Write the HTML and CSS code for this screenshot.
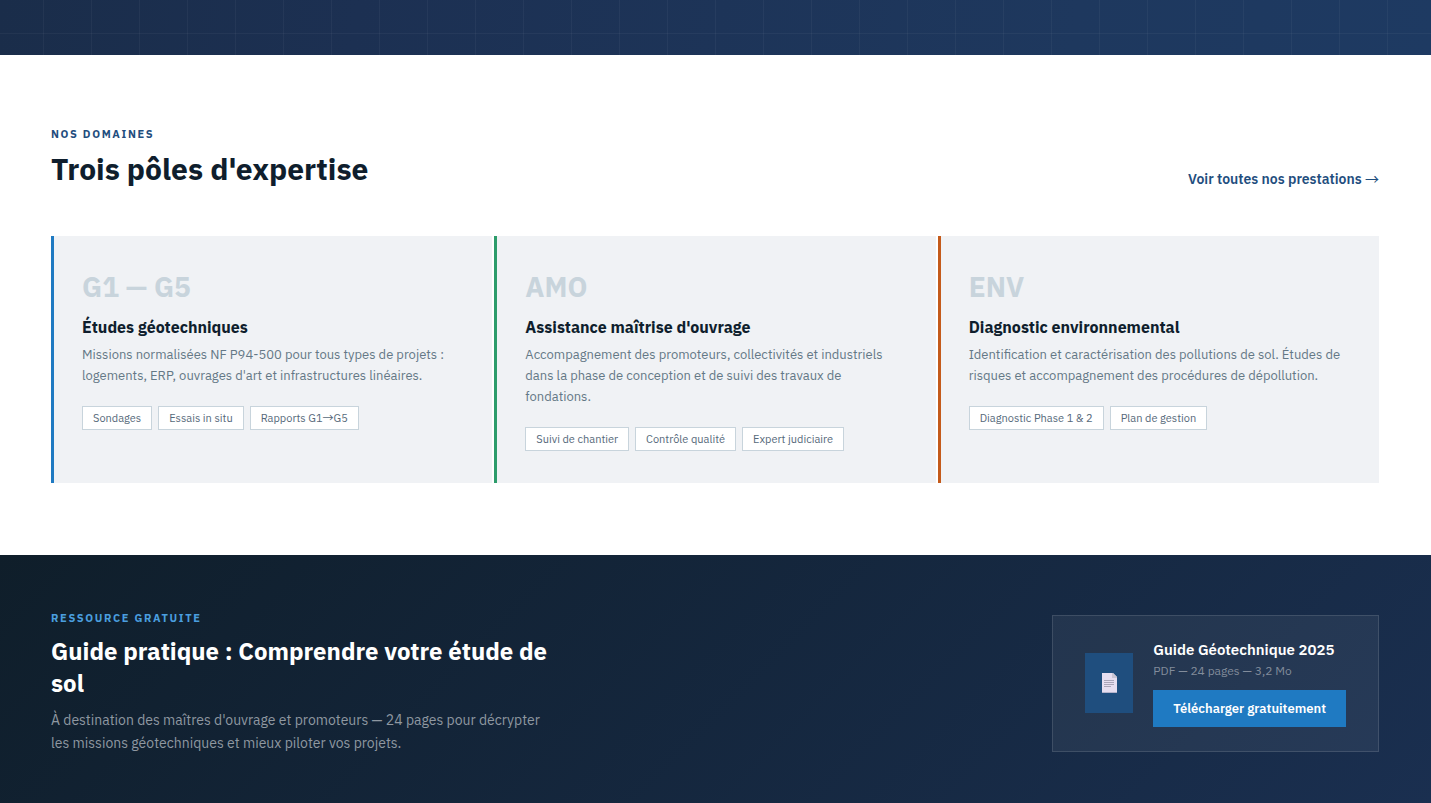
FILE: index.html
```html
<!DOCTYPE html>
<html lang="fr">
<head>
  <meta charset="UTF-8">
  <meta name="viewport" content="width=device-width, initial-scale=1.0">
  <title>Bureau d'études géotechniques</title>
  <link rel="stylesheet" href="styles.css">
</head>
<body>

  <div class="hero-end"></div>

  <section class="domaines">
    <div class="container">
      <div class="section-header">
        <div>
          <div class="eyebrow">Nos domaines</div>
          <h2>Trois pôles d'expertise</h2>
        </div>
        <a href="#" class="link-all">Voir toutes nos prestations <span class="arrow">→</span></a>
      </div>

      <div class="poles">
        <article class="pole pole-geo">
          <div class="pole-code">G1 — G5</div>
          <h3>Études géotechniques</h3>
          <p>Missions normalisées NF P94-500 pour tous types de projets : logements, ERP, ouvrages d'art et infrastructures linéaires.</p>
          <div class="tags">
            <span class="tag">Sondages</span>
            <span class="tag">Essais in situ</span>
            <span class="tag">Rapports G1<span class="arrow">→</span>G5</span>
          </div>
        </article>
        <article class="pole pole-amo">
          <div class="pole-code">AMO</div>
          <h3>Assistance maîtrise d'ouvrage</h3>
          <p>Accompagnement des promoteurs, collectivités et industriels dans la phase de conception et de suivi des travaux de fondations.</p>
          <div class="tags">
            <span class="tag">Suivi de chantier</span>
            <span class="tag">Contrôle qualité</span>
            <span class="tag">Expert judiciaire</span>
          </div>
        </article>
        <article class="pole pole-env">
          <div class="pole-code">ENV</div>
          <h3>Diagnostic environnemental</h3>
          <p>Identification et caractérisation des pollutions de sol. Études de risques et accompagnement des procédures de dépollution.</p>
          <div class="tags">
            <span class="tag">Diagnostic Phase 1 &amp; 2</span>
            <span class="tag">Plan de gestion</span>
          </div>
        </article>
      </div>
    </div>
  </section>

  <section class="ressource">
    <div class="container ressource-inner">
      <div class="ressource-text">
        <div class="eyebrow">Ressource gratuite</div>
        <h2>Guide pratique : Comprendre votre étude de sol</h2>
        <p>À destination des maîtres d'ouvrage et promoteurs — 24 pages pour décrypter les missions géotechniques et mieux piloter vos projets.</p>
      </div>
      <div class="guide">
        <div class="guide-icon">
          <svg width="16" height="20" viewBox="0 0 16 20" aria-hidden="true">
            <path d="M1 0h11l4 4v16H1z" fill="#e6def0"/>
            <path d="M11 0h1l4 4v1h-5z" fill="#c9c5d4"/>
            <path d="M1 19h15v1H1z" fill="#b5b4cc"/>
            <path d="M3 7h10v1H3zM3 9h10v1H3zM3 11h10v1H3zM3 13h7v1H3z" fill="#aaa5b8"/>
          </svg>
        </div>
        <div>
          <div class="guide-title">Guide Géotechnique 2025</div>
          <div class="guide-meta">PDF — 24 pages — 3,2 Mo</div>
          <button type="button" class="btn">Télécharger gratuitement</button>
        </div>
      </div>
    </div>
  </section>

</body>
</html>
```
FILE: styles.css
```css
* {
  margin: 0;
  padding: 0;
  box-sizing: border-box;
}
body {
  font-family: "IBM Plex Sans", Roboto, "Liberation Sans", sans-serif;
  color: #0f1e2d;
  background: #fff;
}
.container {
  padding: 0 52px 0 51px;
}
.arrow {
  font-family: "Noto Sans CJK JP", sans-serif;
  font-weight: 400;
  line-height: 1;
}
.hero-end {
  height: 55px;
  background:
    linear-gradient(rgba(255,255,255,0.04) 1px, transparent 1px) 0 33px / 48px 48px,
    linear-gradient(90deg, rgba(255,255,255,0.04) 1px, transparent 1px) 43px 0 / 48px 48px,
    linear-gradient(100deg, #1a2d4a 0%, #1c3052 25%, #1e385e 75%, #1e3a62 100%);
}

/* Domaines */
.domaines {
  padding: 72px 0;
}
.section-header {
  display: flex;
  justify-content: space-between;
  align-items: flex-end;
  margin-bottom: 48px;
}
.eyebrow {
  font-size: 11px;
  line-height: 14px;
  font-weight: 700;
  letter-spacing: 0.15em;
  text-transform: uppercase;
  color: #1f4e7e;
  margin-bottom: 8px;
}
.section-header h2 {
  font-size: 30px;
  line-height: 39px;
  font-weight: 700;
}
.link-all {
  font-size: 14px;
  line-height: 18px;
  font-weight: 600;
  color: #1f4e7e;
  text-decoration: none;
}
.poles {
  display: grid;
  grid-template-columns: repeat(3, 1fr);
  gap: 2px;
}
.pole {
  background: #f0f2f5;
  border-left: 3px solid #1f7ac2;
  padding: 32px 28px;
}
.pole-amo {
  border-left-color: #2d9c6b;
}
.pole-env {
  border-left-color: #c45a1a;
}
.pole-code {
  font-size: 28px;
  line-height: 38px;
  font-weight: 700;
  color: #c8d4dc;
  margin-bottom: 10px;
}
.pole h3 {
  font-size: 16px;
  line-height: 22px;
  font-weight: 700;
  margin-bottom: 6px;
}
.pole p {
  font-size: 13px;
  line-height: 21px;
  color: #647886;
  margin-bottom: 20px;
}
.tags {
  display: flex;
  flex-wrap: wrap;
  gap: 6px;
}
.tag {
  font-size: 11px;
  line-height: 14px;
  padding: 4px 10px;
  color: #56697a;
  background: #fff;
  border: 1px solid #c8d4dc;
}

/* Ressource */
.ressource {
  padding: 56px 0;
  background: linear-gradient(135deg, #0f1e2a 0%, #1a2f50 100%);
}
.ressource-inner {
  display: flex;
  justify-content: space-between;
  align-items: center;
}
.ressource-text {
  max-width: 500px;
}
.ressource .eyebrow {
  color: #4a9edf;
  margin-bottom: 10px;
}
.ressource h2 {
  font-size: 24px;
  line-height: 32px;
  font-weight: 700;
  color: #fff;
  margin-bottom: 10px;
}
.ressource p {
  font-size: 14px;
  line-height: 23px;
  color: #8f98a1;
}
.guide {
  display: flex;
  align-items: center;
  gap: 20px;
  padding: 24px 32px;
  background: rgba(255,255,255,0.06);
  border: 1px solid rgba(255,255,255,0.12);
}
.guide-icon {
  display: flex;
  align-items: center;
  justify-content: center;
  width: 48px;
  height: 60px;
  background: #1f4e7e;
}
.guide-title {
  font-size: 15px;
  line-height: 20px;
  font-weight: 600;
  color: #fff;
  margin-bottom: 2px;
}
.guide-meta {
  font-size: 12px;
  line-height: 18px;
  color: #828c9b;
  margin-bottom: 10px;
}
.btn {
  font-family: inherit;
  font-size: 13px;
  line-height: 17px;
  font-weight: 600;
  padding: 10px 20px;
  color: #fff;
  background: #1f7ac2;
  border: none;
  cursor: pointer;
}
```
